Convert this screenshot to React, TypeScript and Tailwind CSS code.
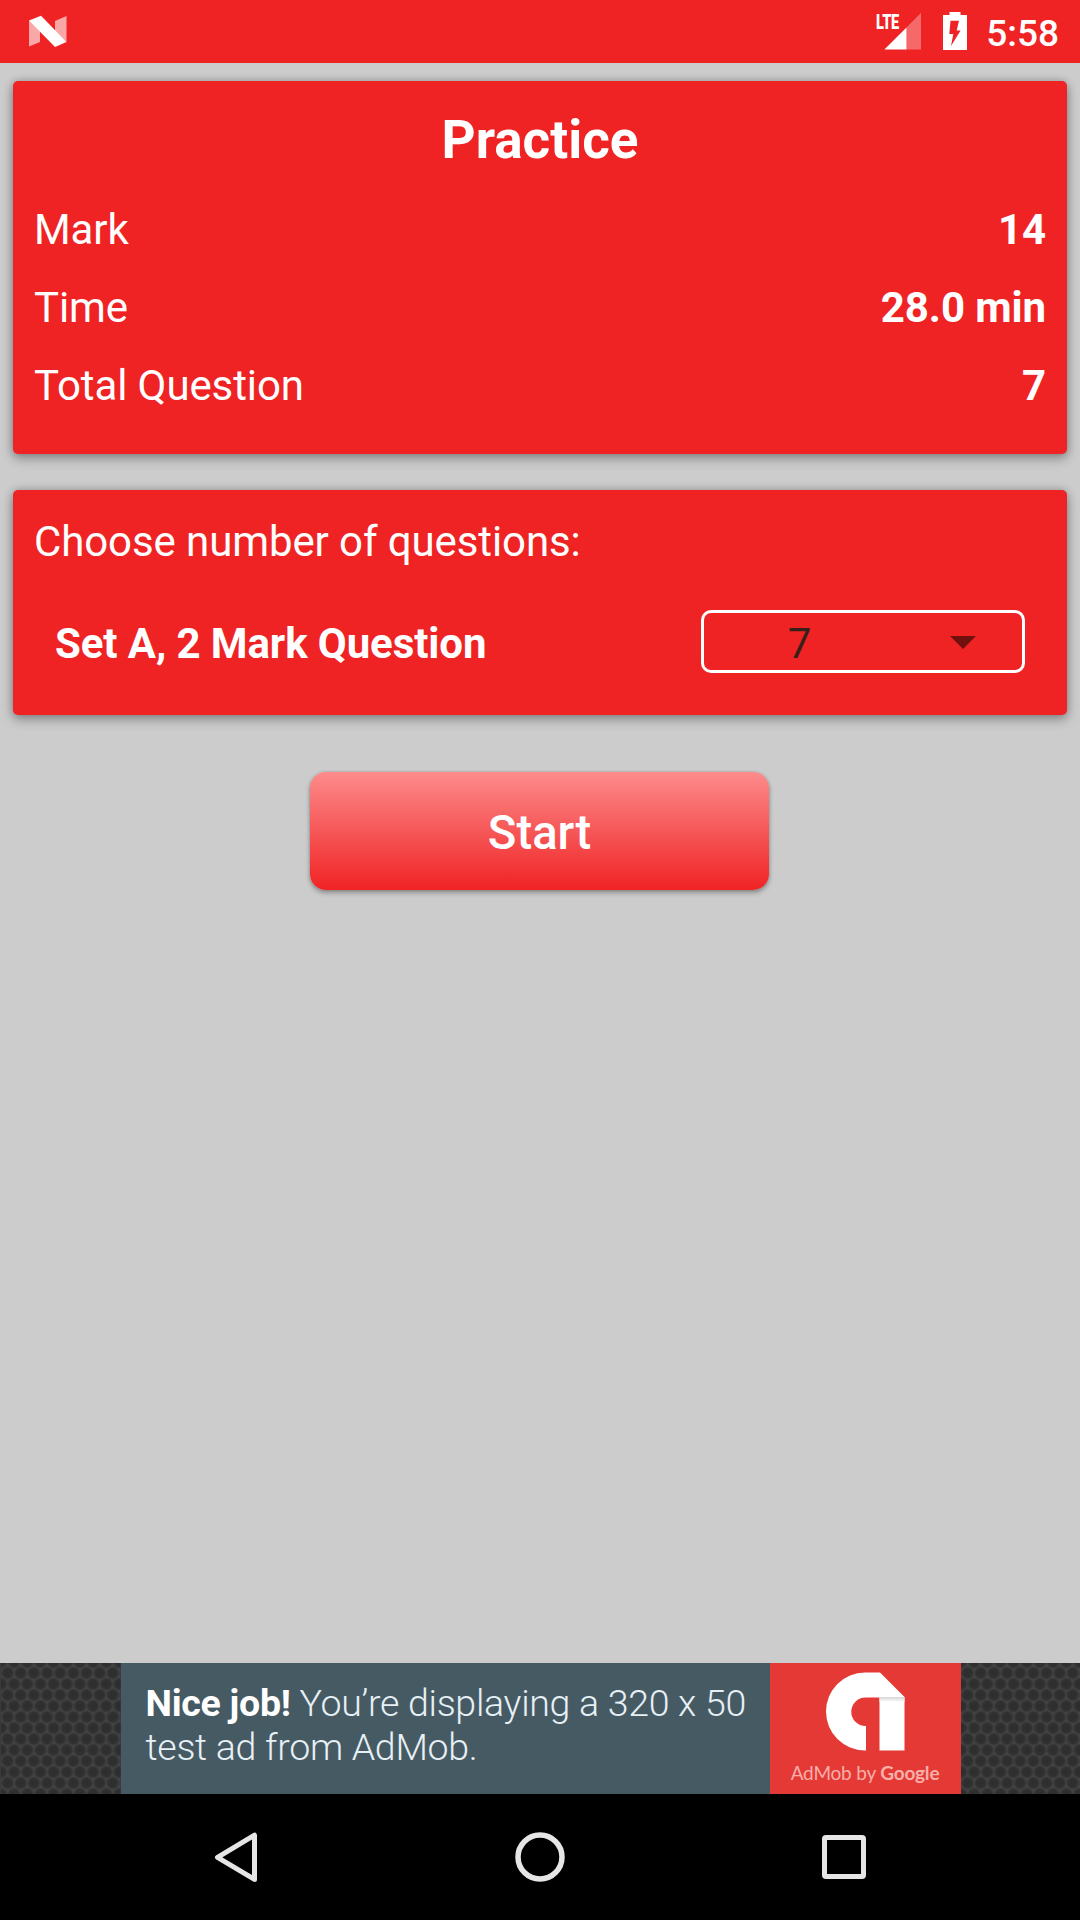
import type { ReactNode } from 'react';

function StatusBar() {
  return (
    <header className="flex h-[63px] shrink-0 items-start bg-[#f02324] text-white">
      <svg className="ml-[28px] mt-[15px] h-[33px] w-[40px]" viewBox="0 0 40 33" fill="#fff">
        <path d="M1 5.500 12 13v14L1 31.500z" opacity=".6" />
        <path d="M27 6 38.500 1v26L27 17z" opacity=".6" />
        <path d="M1 5.500 13 .8 38.500 27 27 32z" />
      </svg>
      <div className="relative ml-auto h-[63px] w-[48px]">
        <span className="absolute left-0 top-[11px] origin-left scale-x-[0.71] text-[20.5px] font-black leading-[22px] tracking-[-0.4px]">
          LTE
        </span>
        <svg className="absolute left-[8px] top-[12px] h-[38px] w-[39px]" viewBox="0 0 39 38" fill="#fff">
          <path d="M37 .8V37.500H22.500V15.400z" opacity=".32" />
          <path d="M22.500 15.400V37.500H.4z" />
        </svg>
      </div>
      <svg className="ml-[19px] mt-[12px] h-[38px] w-[24px]" viewBox="0 0 24 38">
        <path
          fill="#fff"
          fillRule="evenodd"
          d="M6.500 0h11v3H24v35H0V3h6.500zM7.500 8.700 6.300 22h4L8 34 17.600 18.500H13.700L16 8.700z"
        />
      </svg>
      <span className="ml-[19px] mr-[21px] mt-[12px] text-[37px] font-medium leading-[44px]">5:58</span>
    </header>
  );
}

function Card({ className, children }: { className: string; children: ReactNode }) {
  return (
    <section
      className={`mx-[13px] rounded-[5px] bg-[#f02324] text-[42px] tracking-[-0.1px] text-white shadow-[0_5px_12px_rgba(0,0,0,0.27),0_0_9px_rgba(0,0,0,0.23)] ${className}`}
    >
      {children}
    </section>
  );
}

function Row({ label, value }: { label: string; value: string }) {
  return (
    <div className="flex justify-between leading-[78px]">
      <span>{label}</span>
      <span className="font-bold">{value}</span>
    </div>
  );
}

function Mesh() {
  return (
    <svg className="h-full min-w-0 flex-1" width="100%" height="100%">
      <defs>
        <radialGradient id="dot">
          <stop offset="0" stopColor="#2d2d2d" />
          <stop offset=".65" stopColor="#303030" />
          <stop offset="1" stopColor="#414141" />
        </radialGradient>
        <pattern id="mesh" width="13.15" height="22" patternUnits="userSpaceOnUse">
          <rect width="14" height="22" fill="#434343" />
          <circle cx="6.600" cy="10" r="6.700" fill="url(#dot)" />
          <circle cx="0" cy="-1" r="6.700" fill="url(#dot)" />
          <circle cx="13.150" cy="-1" r="6.700" fill="url(#dot)" />
          <circle cx="0" cy="21" r="6.700" fill="url(#dot)" />
          <circle cx="13.150" cy="21" r="6.700" fill="url(#dot)" />
        </pattern>
      </defs>
      <rect width="100%" height="100%" fill="url(#mesh)" />
    </svg>
  );
}

function AdBanner() {
  return (
    <div className="flex h-[131px] shrink-0 bg-[#3a3a3a] pl-px">
      <Mesh />
      <div className="h-full w-[649px] bg-[#465a64] pl-[25px] pt-[19px] text-[37.500px] font-light leading-[43.500px] tracking-[-0.28px] text-[#e6f0f5]">
        <p className="whitespace-nowrap">
          <b className="font-bold text-white">Nice job!</b> You’re displaying a 320 x 50
        </p>
        <p className="whitespace-nowrap">test ad from AdMob.</p>
      </div>
      <div className="flex h-full w-[191px] flex-col items-center bg-[#e53935]">
        <svg className="mt-[9px] h-[80px] w-[80px]" viewBox="0 0 80 80">
          <defs>
            <linearGradient id="fold" x1="0" y1="0" x2="0" y2="1">
              <stop offset="0" stopColor="#d4d4d4" />
              <stop offset="1" stopColor="#fff" />
            </linearGradient>
          </defs>
          <path
            fill="#fff"
            d="M40 .5H55L79.500 25V78.500H54.500V25.500H40.500A14.200 14.200 0 0 0 40.500 54H41V78.500H40A39 39 0 0 1 40 .5z"
          />
          <rect x="54.500" y="25" width="25" height="5" fill="url(#fold)" />
        </svg>
        <span className="mt-[7px] whitespace-nowrap font-['Lato'] text-[19px] leading-[28px] tracking-[-0.2px] text-[#f7b0a9]">
          AdMob by <b className="font-bold">Google</b>
        </span>
      </div>
      <Mesh />
    </div>
  );
}

function NavBar() {
  return (
    <nav className="flex h-[126px] shrink-0 items-start bg-black pt-[36px]">
      <svg className="ml-[212px] h-[54px] w-[48px]" viewBox="0 0 48 54" fill="none" stroke="#e6e6e6">
        <path d="M5.500 27.300 42.500 5.200V49.400z" strokeWidth="5" strokeLinejoin="round" />
      </svg>
      <svg className="ml-[253px] h-[54px] w-[54px]" viewBox="0 0 54 54" fill="none" stroke="#e6e6e6">
        <circle cx="27" cy="27" r="22" strokeWidth="5.500" />
      </svg>
      <div className="ml-[255px] mt-[5px] h-[44px] w-[44px] rounded-[4px] border-[5px] border-[#e6e6e6]" />
    </nav>
  );
}

export default function App() {
  return (
    <div className="flex h-[1920px] w-[1080px] flex-col overflow-hidden bg-[#cccccc] font-['Roboto',sans-serif]">
      <StatusBar />
      <main className="flex flex-1 flex-col pt-[18px]">
        <Card className="h-[373px] px-[21px] pt-[28px]">
          <h1 className="mb-[20px] text-center text-[53px] font-bold leading-[62px] tracking-normal">Practice</h1>
          <Row label="Mark" value="14" />
          <Row label="Time" value="28.0 min" />
          <Row label="Total Question" value="7" />
        </Card>
        <Card className="mt-[36px] h-[225px] px-[21px] pt-[27px]">
          <p className="leading-[50px]">Choose number of questions:</p>
          <div className="mt-[43px] flex items-center justify-between px-[21px]">
            <span className="pt-1 font-bold leading-[50px]">Set A, 2 Mark Question</span>
            <button className="flex h-[63px] w-[324px] items-center rounded-[10px] border-3 border-white text-[#38201a]">
              <span className="w-[191px] pt-1 text-center leading-[50px]">7</span>
              <svg className="ml-[55px] mt-[2px] h-[13px] w-[26px]" viewBox="0 0 26 13">
                <path d="M0 0H26L13 13z" fill="#70100f" />
              </svg>
            </button>
          </div>
        </Card>
        <button className="ml-[310px] mt-[57px] flex h-[118px] w-[459px] items-center justify-center rounded-[16px] bg-linear-to-b/srgb from-[#fd8b8b] to-[#f02324] pt-[3px] text-[47.250px] font-medium leading-[56px] text-white shadow-[0_3px_5px_rgba(0,0,0,0.3),0_0_3px_rgba(0,0,0,0.18)]">
          Start
        </button>
      </main>
      <AdBanner />
      <NavBar />
    </div>
  );
}
